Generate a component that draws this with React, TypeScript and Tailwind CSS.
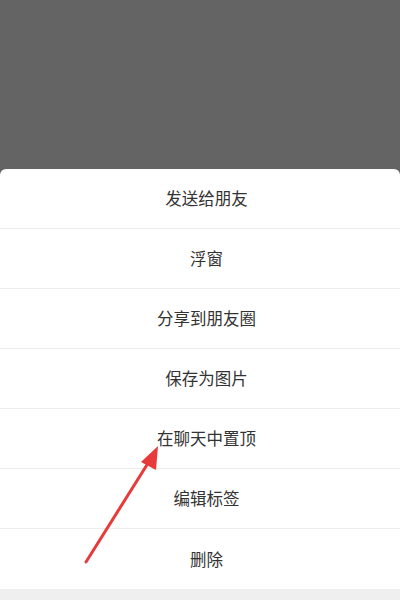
import React from "react";

const items = [
  "发送给朋友",
  "浮窗",
  "分享到朋友圈",
  "保存为图片",
  "在聊天中置顶",
  "编辑标签",
  "删除",
];

export default function App() {
  return (
    <div
      className="relative w-[400px] h-[600px] flex flex-col bg-[#646464] overflow-hidden"
      style={{ fontFamily: '"Noto Sans CJK SC", "Noto Sans", sans-serif' }}
    >
      <div className="h-[169px] shrink-0" />
      <div className="flex flex-col bg-white rounded-t-[6px]">
        {items.map((item, i) => (
          <div
            key={item}
            className={
              i < items.length - 1
                ? "h-[60px] flex items-center justify-center pl-[13px] border-b border-[#ececec] text-[16.5px] text-[#333333]"
                : "h-[60px] flex items-center justify-center pl-[13px] text-[16.5px] text-[#333333]"
            }
          >
            {item}
          </div>
        ))}
      </div>
      <div className="flex-1 bg-[#efefef]" />

      {/* red annotation arrow */}
      <svg
        className="absolute left-0 top-0 pointer-events-none"
        width="400"
        height="600"
        viewBox="0 0 400 600"
      >
        <line
          x1="86"
          y1="562"
          x2="150"
          y2="460"
          stroke="#e83a3a"
          strokeWidth="3"
          strokeLinecap="round"
        />
        <polygon points="158,446 141,462 156,470" fill="#e83a3a" />
      </svg>
    </div>
  );
}
